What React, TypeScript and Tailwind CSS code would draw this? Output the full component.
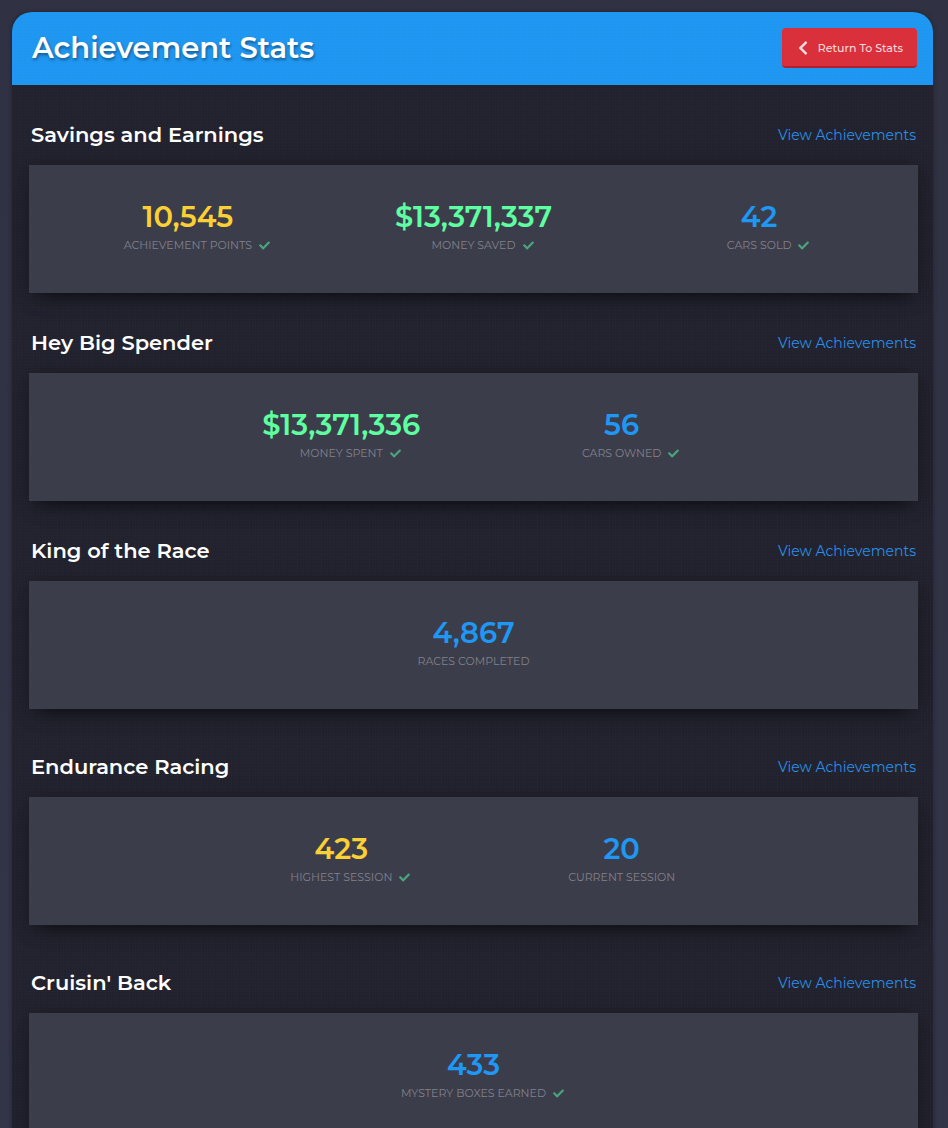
import clsx from 'clsx'
import { FaCheck, FaChevronLeft } from 'react-icons/fa'

type StatColor = 'yellow' | 'green' | 'blue'

interface Stat {
  value: string
  label: string
  color: StatColor
  completed?: boolean
}

interface StatSection {
  title: string
  stats: Stat[]
  spaced?: boolean
}

const VALUE_COLORS: Record<StatColor, string> = {
  yellow: 'text-[#fbd034]',
  green: 'text-[#5dffa0]',
  blue: 'text-[#1f97f4]',
}

const SECTIONS: StatSection[] = [
  {
    title: 'Savings and Earnings',
    stats: [
      { value: '10,545', label: 'Achievement Points', color: 'yellow', completed: true },
      { value: '$13,371,337', label: 'Money Saved', color: 'green', completed: true },
      { value: '42', label: 'Cars Sold', color: 'blue', completed: true },
    ],
  },
  {
    title: 'Hey Big Spender',
    stats: [
      { value: '$13,371,336', label: 'Money Spent', color: 'green', completed: true },
      { value: '56', label: 'Cars Owned', color: 'blue', completed: true },
    ],
  },
  {
    title: 'King of the Race',
    stats: [{ value: '4,867', label: 'Races Completed', color: 'blue' }],
  },
  {
    title: 'Endurance Racing',
    spaced: true,
    stats: [
      { value: '423', label: 'Highest Session', color: 'yellow', completed: true },
      { value: '20', label: 'Current Session', color: 'blue' },
    ],
  },
  {
    title: "Cruisin' Back",
    spaced: true,
    stats: [{ value: '433', label: 'Mystery Boxes Earned', color: 'blue', completed: true }],
  },
]

function StatItem({ stat }: { stat: Stat }) {
  return (
    <div className="flex w-1/3 flex-col items-center">
      <div className={clsx('text-[29px] leading-8 font-semibold', VALUE_COLORS[stat.color])}>
        {stat.value}
      </div>
      {/* the tick hangs outside the label so the label stays centered */}
      <div className="mt-1 flex items-center text-[11px] leading-4 whitespace-nowrap text-[#81818a] uppercase">
        {stat.label}
        {stat.completed && <FaCheck className="-mr-[18px] ml-[7px] size-[11px] text-[#4aa57c]" />}
      </div>
    </div>
  )
}

function Section({ section }: { section: StatSection }) {
  return (
    <section className={clsx(section.spaced && 'mt-2')}>
      <div className="flex items-center justify-between px-0.5 pt-9 pb-4">
        <h2 className="text-[21px] leading-7 font-semibold text-white">{section.title}</h2>
        <a href="#" className="text-sm leading-7 text-[#2a8fe8] hover:underline">
          View Achievements
        </a>
      </div>
      <div
        className={clsx(
          'flex justify-center bg-[#3c3d4b] pt-9 pr-4 pb-10 shadow-[0_2px_20px_rgba(0,0,0,0.25),0_12px_18px_-10px_rgba(0,0,0,0.5)]',
          section.stats.length === 2 ? 'pl-8' : 'pl-4'
        )}
      >
        {section.stats.map((stat) => (
          <StatItem key={stat.label} stat={stat} />
        ))}
      </div>
    </section>
  )
}

export default function App() {
  return (
    <div className="min-h-screen bg-[#313344] bg-linear-to-b from-[#303142] to-[#333548] pt-3 pr-[15px] pl-3 font-['Montserrat','Inter',sans-serif]">
      <main className="overflow-hidden rounded-t-[20px] bg-[#21222d] shadow-[0_0_5px_rgba(0,0,0,0.3)]">
        <header className="flex items-center justify-between bg-[#1f98f4] bg-[repeating-linear-gradient(90deg,rgba(0,0,0,0.015)_0_1px,transparent_1px_3px),repeating-linear-gradient(0deg,rgba(0,0,0,0.015)_0_1px,transparent_1px_3px)] pt-4 pr-4 pb-[17px] pl-5">
          <h1 className="text-[29px] leading-[38px] font-semibold text-white [text-shadow:1px_2px_3px_rgba(0,0,0,0.4)]">
            Achievement Stats
          </h1>
          <button
            type="button"
            className="flex h-10 items-center gap-2.5 rounded border-b-2 border-[#b2202d] bg-[#d9303b] pt-0.5 pr-3.5 pl-4 text-[11px] font-medium text-[#fbd9dc]"
          >
            <FaChevronLeft className="h-4 w-2.5" />
            Return To Stats
          </button>
        </header>
        <div className="bg-[repeating-linear-gradient(90deg,rgba(255,255,255,0.009)_0_1px,transparent_1px_3px),repeating-linear-gradient(0deg,rgba(255,255,255,0.009)_0_1px,transparent_1px_3px)] pr-[15px] pb-10 pl-[17px]">
          {SECTIONS.map((section) => (
            <Section key={section.title} section={section} />
          ))}
        </div>
      </main>
    </div>
  )
}
